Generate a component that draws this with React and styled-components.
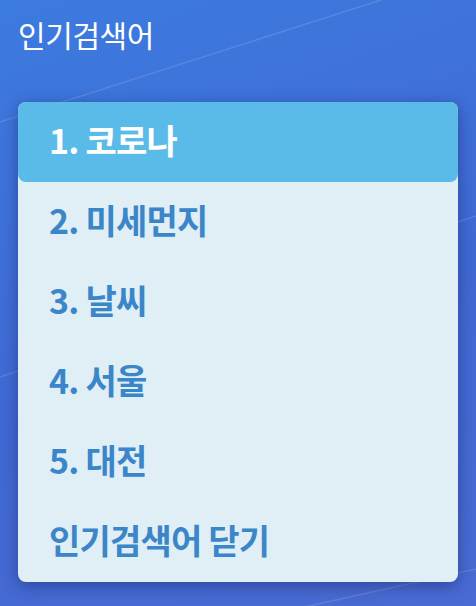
import React from "react";
import styled, { createGlobalStyle } from "styled-components";

const GlobalStyle = createGlobalStyle`
    html, body {
        margin: 0;
        padding: 0;
    }
    body {
        font-family: "Noto Sans CJK KR", "Noto Sans", sans-serif;
    }
`;

const keywords = ["코로나", "미세먼지", "날씨", "서울", "대전"];

export default function App() {
    return (
        <>
            <GlobalStyle />
            <Page>
                <Streaks viewBox="0 0 476 606" preserveAspectRatio="none">
                    <line x1="0" y1="122" x2="381" y2="0" />
                    <line x1="0" y1="377" x2="476" y2="216" />
                    <line x1="300" y1="608" x2="476" y2="569" />
                </Streaks>
                <Title>인기검색어</Title>
                <Card>
                    {keywords.map((word, i) => (
                        <Item key={word} active={i === 0}>
                            {i + 1}. {word}
                        </Item>
                    ))}
                    <Item>인기검색어 닫기</Item>
                </Card>
            </Page>
        </>
    );
}

const Page = styled.div`
    position: relative;
    width: 476px;
    height: 606px;
    overflow: hidden;
    box-sizing: border-box;
    padding: 14px 18px 0;
    display: flex;
    flex-direction: column;
    background: linear-gradient(160deg, #3c7bdf 0%, #4169d4 55%, #496bd3 100%);
`;

const Streaks = styled.svg`
    position: absolute;
    inset: 0;
    width: 100%;
    height: 100%;
    pointer-events: none;

    line {
        stroke: rgba(255, 255, 255, 0.13);
        stroke-width: 1.6;
    }
`;

const Title = styled.h1`
    position: relative;
    margin: 0;
    height: 40px;
    font-size: 30px;
    font-weight: 400;
    line-height: 40px;
    color: #ffffff;
    letter-spacing: -0.4px;
`;

const Card = styled.div`
    position: relative;
    margin-top: 48px;
    width: 440px;
    display: flex;
    flex-direction: column;
    background: #e0eef6;
    border-radius: 8px;
    box-shadow: 0 4px 16px rgba(25, 35, 100, 0.5);
`;

const Item = styled.div`
    box-sizing: border-box;
    height: 80px;
    display: flex;
    align-items: center;
    padding: 0 0 5px 31px;
    border-radius: 8px;
    background: ${({ active }) => (active ? "#5abbe8" : "transparent")};
    color: ${({ active }) => (active ? "#ffffff" : "#3a86c8")};
    font-size: 34px;
    font-weight: 700;
    letter-spacing: -0.8px;
`;
